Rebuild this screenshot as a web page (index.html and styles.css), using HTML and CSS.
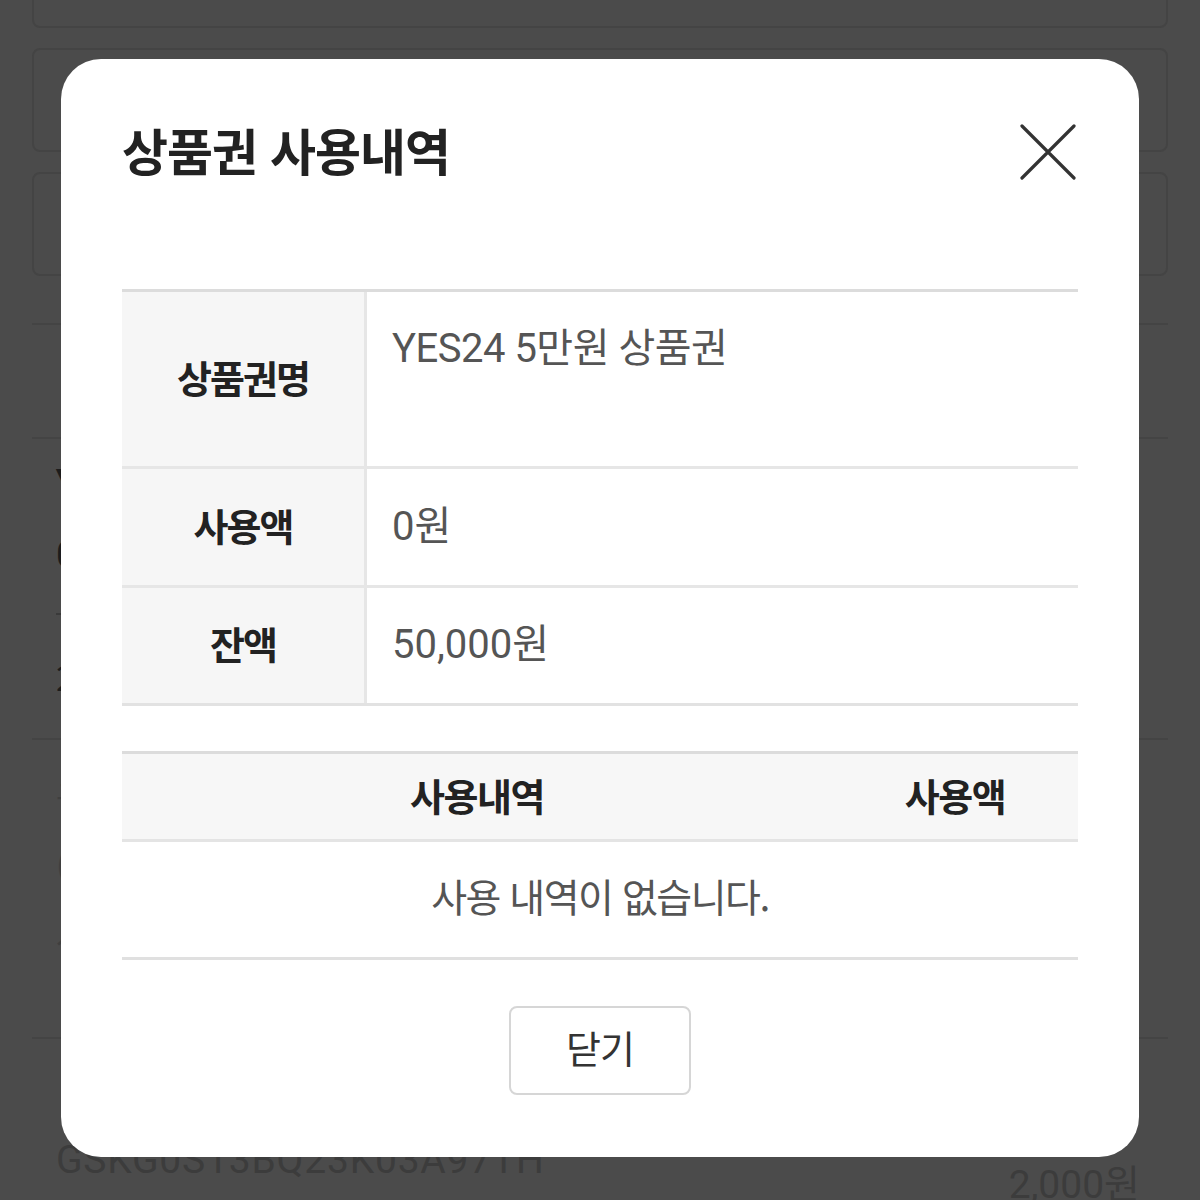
FILE: index.html
```html
<!DOCTYPE html>
<html lang="ko">
<head>
<meta charset="utf-8">
<title>상품권 사용내역</title>
<link rel="stylesheet" href="styles.css">
</head>
<body>
<div class="page">
  <div class="box box-first"></div>
  <div class="box"></div>
  <div class="box"></div>
  <div class="sep sep-first"></div>
  <div class="band"></div>
  <div class="sep"></div>
  <div class="item">
    <div class="item-title">YES24 5만원 상품권</div>
    <div class="item-row"><span>0원</span><span>50,000원</span></div>
    <div class="item-line"></div>
    <div class="item-date">2024.01.01</div>
  </div>
  <div class="sep"></div>
  <div class="item item-tall">
    <div class="item-faint">구매 상품</div>
    <div class="item-faint">(주문번호)</div>
    <div class="item-faint">사용처</div>
  </div>
  <div class="sep"></div>
  <div class="foot">
    <div class="code">GSKG0S13BQ23K03A97TH</div>
    <div class="price">2,000원</div>
  </div>
</div>

<div class="overlay">
  <div class="modal">
    <div class="modal-head">
      <h2 class="modal-title">상품권 사용내역</h2>
      <button class="close" aria-label="닫기">
        <svg width="56" height="56" viewBox="0 0 56 56"><path d="M2 2 L54 54 M54 2 L2 54" stroke="#333" stroke-width="3.2" stroke-linecap="round" fill="none"/></svg>
      </button>
    </div>

    <div class="info">
      <div class="info-row row-name">
        <div class="info-label">상품권명</div>
        <div class="info-value">YES24 5만원 상품권</div>
      </div>
      <div class="info-row">
        <div class="info-label">사용액</div>
        <div class="info-value">0원</div>
      </div>
      <div class="info-row">
        <div class="info-label">잔액</div>
        <div class="info-value">50,000원</div>
      </div>
    </div>

    <div class="usage">
      <div class="usage-head">
        <div class="col-desc">사용내역</div>
        <div class="col-amt">사용액</div>
      </div>
      <div class="usage-empty">사용 내역이 없습니다.</div>
    </div>

    <button class="btn-close">닫기</button>
  </div>
</div>
</body>
</html>
```

FILE: styles.css
```css
* { box-sizing: border-box; }
html, body { margin: 0; padding: 0; }
body {
  width: 1200px;
  height: 1200px;
  overflow: hidden;
  background: #4b4b4b;
  font-family: "Noto Sans CJK KR", "Noto Sans", sans-serif;
}

/* dimmed page behind the modal */
.page { padding: 0 32px; }
.box {
  height: 104px;
  border: 2px solid #444444;
  border-radius: 8px;
  margin-bottom: 20px;
}
.box-first { margin-top: -76px; }
.sep { height: 2px; background: #444444; }
.sep-first { margin-top: 47px; }
.band { height: 112px; }
.item { height: 299px; padding: 11px 30px 0 24px; color: #1c1c1c; }
.item-title { font-size: 36px; line-height: 60px; font-weight: 700; }
.item-row {
  display: flex;
  justify-content: space-between;
  margin-top: 15px;
  font-family: "Roboto", "Noto Sans CJK KR", sans-serif;
  font-size: 36px;
  line-height: 60px;
}
.item-line { width: 14px; height: 2px; background: #3a3a3a; margin-top: 28px; }
.item-date { margin-top: 37px; font-size: 34px; line-height: 50px; }
.item-tall { height: 297px; padding-top: 20px; color: #3f3f3f; }
.item-faint { font-size: 32px; line-height: 70px; }
.foot { padding: 101px 28px 0 24px; color: #3c3c3c; }
.code {
  font-family: "Roboto", sans-serif;
  font-size: 39px;
  line-height: 40px;
  letter-spacing: 0.8px;
}
.price {
  margin-top: -15px;
  text-align: right;
  font-family: "Roboto", "Noto Sans CJK KR", sans-serif;
  font-size: 39px;
  line-height: 40px;
}

/* modal */
.overlay {
  position: fixed;
  inset: 0;
  display: flex;
  justify-content: center;
  align-items: flex-start;
  padding-top: 59px;
}
.modal {
  width: 1078px;
  height: 1098px;
  background: #ffffff;
  border-radius: 40px;
  padding: 58px 61px 0;
  display: flex;
  flex-direction: column;
}
.modal-head {
  height: 70px;
  display: flex;
  align-items: center;
  justify-content: space-between;
}
.modal-title {
  margin: 0;
  font-size: 50px;
  font-weight: 700;
  letter-spacing: -1px;
  color: #222;
  line-height: 70px;
  padding-bottom: 6px;
}
.close {
  border: 0;
  background: none;
  padding: 0;
  margin-right: 2px;
  width: 56px;
  height: 56px;
  display: flex;
}

.info {
  margin-top: 102px;
  border-top: 3px solid #dcdcdc;
}
.info-row {
  display: flex;
  height: 119px;
  border-bottom: 3px solid #e6e6e6;
}
.row-name { height: 177px; }
.info-row:last-child { height: 118px; border-bottom-color: #e2e2e2; }
.info-label {
  width: 245px;
  background: #f6f6f6;
  border-right: 3px solid #e6e6e6;
  display: flex;
  align-items: center;
  justify-content: center;
  padding-bottom: 6px;
  font-size: 38px;
  font-weight: 700;
  letter-spacing: -2px;
  color: #222;
}
.info-value {
  flex: 1;
  display: flex;
  align-items: center;
  padding-left: 25px;
  padding-bottom: 9px;
  font-family: "Roboto", "Noto Sans CJK KR", sans-serif;
  font-size: 40px;
  color: #555;
}
.row-name .info-value { align-items: flex-start; padding-top: 24px; letter-spacing: -0.5px; }

.usage {
  margin-top: 45px;
  border-top: 3px solid #dcdcdc;
}
.usage-head {
  display: flex;
  height: 88px;
  background: #f7f7f7;
  border-bottom: 3px solid #e4e4e4;
  align-items: center;
  padding-bottom: 5px;
  font-size: 38px;
  font-weight: 700;
  letter-spacing: -1.5px;
  color: #222;
}
.col-desc { width: 710px; text-align: center; }
.col-amt { flex: 1; text-align: center; }
.usage-empty {
  height: 118px;
  border-bottom: 3px solid #e0e0e0;
  display: flex;
  align-items: center;
  justify-content: center;
  padding-bottom: 10px;
  font-size: 39px;
  letter-spacing: -1.5px;
  color: #555;
}

.btn-close {
  align-self: center;
  margin-top: 46px;
  width: 182px;
  height: 89px;
  border: 2px solid #d6d6d6;
  border-radius: 8px;
  background: #fff;
  padding: 0 0 8px;
  font-family: "Noto Sans CJK KR", sans-serif;
  font-size: 38px;
  color: #333;
  letter-spacing: -1px;
}
```
